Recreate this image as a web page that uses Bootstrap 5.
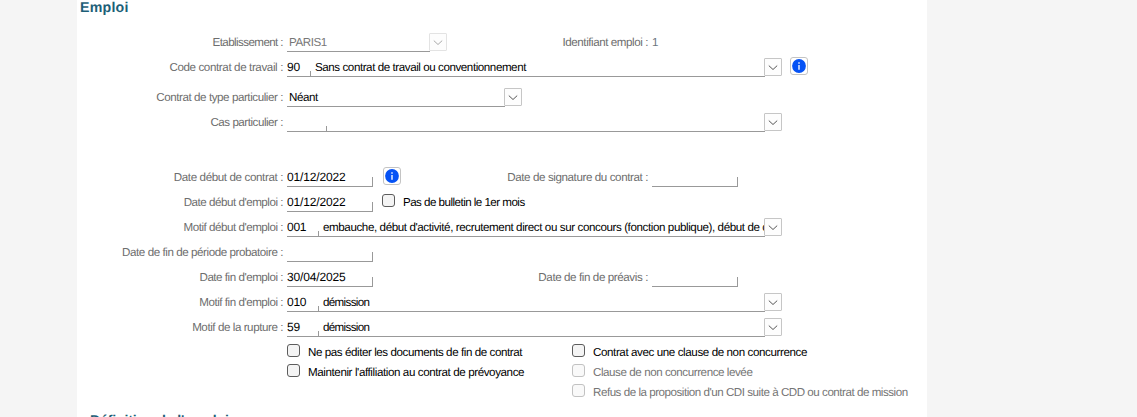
<!DOCTYPE html>
<html lang="fr">
<head>
<meta charset="utf-8">
<meta name="viewport" content="width=device-width, initial-scale=1">
<title>Emploi</title>
<link href="https://cdn.jsdelivr.net/npm/bootstrap@5.3.0/dist/css/bootstrap.min.css" rel="stylesheet">
<style>
body{background:#f5f5f5;font:11.6px/16px "Liberation Sans",Arial,sans-serif;letter-spacing:-.43px;color:#000;text-rendering:geometricPrecision}
.sheet{width:850px;height:417px;margin-left:77px;background:#fff}
.heading{font-size:14.2px;line-height:17px;font-weight:700;color:#1d5f78;letter-spacing:.22px;margin:0 0 10px;padding-left:3px}
.heading-next{letter-spacing:-.19px;padding-left:13px;margin-top:12px}
.line{height:25px}
.gap-s{margin-top:5px}.gap-l{margin-top:30px}
.lbl{width:206px;margin-right:4px;padding-top:8px;text-align:right;color:#6d6d6d;white-space:nowrap}
.lbl-2{margin-right:4px;padding-top:8px;text-align:right;color:#6d6d6d;white-space:nowrap}
.w-id{width:201px}.w-sign{width:247px}.w-prea{width:275px}
.field{height:25px;border-bottom:1px solid #999;padding-top:8px;white-space:nowrap;overflow:hidden}
.inset{padding-left:2px}
.w-long{width:478px}.w-mid{width:218px}.w-short{width:143px;color:#777}
.date{width:86px;font-size:12px;line-height:15px;letter-spacing:-.15px;background:linear-gradient(#999,#999) right bottom/1px 9px no-repeat}
.code{height:16px;flex:none;font-size:12px;line-height:15px;letter-spacing:-.25px;background:linear-gradient(#999,#999) right bottom/1px 5px no-repeat}
.code-24{width:24px}.code-32{width:32px}.code-40{width:40px}
.combo{width:18px;height:18px;margin:6px 0 0 -1px;border:1px solid #c6c6c6;border-radius:1px;background:#fdfdfd;color:#555}
.combo.off{border-color:#e3e3e3;color:#aaa}
.info{width:18px;height:18px;margin:5px 0 0 8px;border:1px solid #c4c4c4;border-radius:3px;background:#fff}
.date + .info{margin-left:10px}
.combo svg,.info svg{display:block}
.tick{height:20px;white-space:nowrap}
.line .tick{height:25px;padding:4px 0 0 9px}
.box{width:13px;height:13px;border:1px solid #5c5c5c;border-radius:3px;background:#f4f4f4}
.tick .box{margin-top:3px}
.line .tick .box{margin-top:3px}
.tick .cap{margin-left:8px;padding-top:4px}
.tick.off{color:#757575}.tick.off .box{border-color:#c2c2c2;background:#f9f9f9}
.ticks{padding-top:4px}
.ticks-l{width:285px;margin-left:210px}
.t54{letter-spacing:-.38px}.t57{letter-spacing:-.4px}.t64{letter-spacing:-.47px}.t69{letter-spacing:-.53px}.t77{letter-spacing:-.59px}.t88{letter-spacing:-.66px}
</style>
</head>
<body>
<svg width="0" height="0" class="d-none">
<symbol id="chev" viewBox="0 0 16 16"><path d="M3.8 6.6 8 10.5 12.2 6.6" fill="none" stroke="currentColor" stroke-width="1"/></symbol>
<symbol id="inf" viewBox="0 0 16 16"><circle cx="8" cy="8" r="6.9" fill="#0552f5"/><path d="M8 4.2v1.5M8 7v4.8" stroke="#e4edff" stroke-width="1.5"/></symbol>
</svg>
<main class="sheet overflow-hidden">
<h1 class="heading">Emploi</h1>
<div class="line d-flex"><div class="lbl t77">Etablissement :</div><div class="field w-short inset">PARIS1</div><div class="combo off"><svg width="16" height="16"><use href="#chev"/></svg></div><div class="lbl-2 w-id">Identifiant emploi :</div><div class="pt-2 text-secondary">1</div></div>
<div class="line d-flex"><div class="lbl t54">Code contrat de travail :</div><div class="field w-long d-flex"><div class="code code-24">90</div><div class="ps-1">Sans contrat de travail ou conventionnement</div></div><div class="combo"><svg width="16" height="16"><use href="#chev"/></svg></div><div class="info"><svg width="16" height="16"><use href="#inf"/></svg></div></div>
<div class="line gap-s d-flex"><div class="lbl">Contrat de type particulier :</div><div class="field w-mid inset">Néant</div><div class="combo"><svg width="16" height="16"><use href="#chev"/></svg></div></div>
<div class="line d-flex"><div class="lbl t64">Cas particulier :</div><div class="field w-long"><div class="code code-40"></div></div><div class="combo"><svg width="16" height="16"><use href="#chev"/></svg></div></div>
<div class="line gap-l d-flex"><div class="lbl t54">Date début de contrat :</div><div class="field date">01/12/2022</div><div class="info"><svg width="16" height="16"><use href="#inf"/></svg></div><div class="lbl-2 w-sign t57">Date de signature du contrat :</div><div class="field date"></div></div>
<div class="line d-flex"><div class="lbl t64">Date début d'emploi :</div><div class="field date">01/12/2022</div><div class="tick d-flex"><span class="box"></span><span class="cap t69">Pas de bulletin le 1er mois</span></div></div>
<div class="line d-flex"><div class="lbl t64">Motif début d'emploi :</div><div class="field w-long d-flex"><div class="code code-32">001</div><div class="ps-1 t57">embauche, début d'activité, recrutement direct ou sur concours (fonction publique), début de c</div></div><div class="combo"><svg width="16" height="16"><use href="#chev"/></svg></div></div>
<div class="line d-flex"><div class="lbl">Date de fin de période probatoire :</div><div class="field date"></div></div>
<div class="line d-flex"><div class="lbl t64">Date fin d'emploi :</div><div class="field date">30/04/2025</div><div class="lbl-2 w-prea t57">Date de fin de préavis :</div><div class="field date"></div></div>
<div class="line d-flex"><div class="lbl t64">Motif fin d'emploi :</div><div class="field w-long d-flex"><div class="code code-32">010</div><div class="ps-1 t88">démission</div></div><div class="combo"><svg width="16" height="16"><use href="#chev"/></svg></div></div>
<div class="line d-flex"><div class="lbl">Motif de la rupture :</div><div class="field w-long d-flex"><div class="code code-32">59</div><div class="ps-1 t88">démission</div></div><div class="combo"><svg width="16" height="16"><use href="#chev"/></svg></div></div>
<div class="ticks d-flex">
<div class="ticks-l"><div class="tick d-flex"><span class="box"></span><span class="cap">Ne pas éditer les documents de fin de contrat</span></div><div class="tick d-flex"><span class="box"></span><span class="cap t57">Maintenir l'affiliation au contrat de prévoyance</span></div></div>
<div><div class="tick d-flex"><span class="box"></span><span class="cap t57">Contrat avec une clause de non concurrence</span></div><div class="tick off d-flex"><span class="box"></span><span class="cap">Clause de non concurrence levée</span></div><div class="tick off d-flex"><span class="box"></span><span class="cap t64">Refus de la proposition d'un CDI suite à CDD ou contrat de mission</span></div></div>
</div>
<h2 class="heading heading-next">Définition de l'emploi</h2>
</main>
<script src="https://cdn.jsdelivr.net/npm/bootstrap@5.3.0/dist/js/bootstrap.bundle.min.js"></script>
</body>
</html>
